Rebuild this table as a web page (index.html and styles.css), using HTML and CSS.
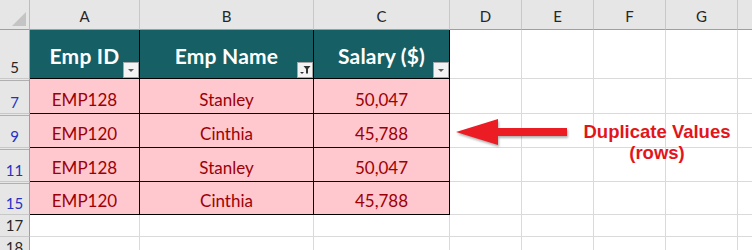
FILE: index.html
```html
<!DOCTYPE html>
<html>
<head>
<meta charset="utf-8">
<link rel="stylesheet" href="styles.css">
</head>
<body>
<div class="stage">
  <div class="sheet">
    <!-- column header row -->
    <div class="corner"><svg class="corner-tri" width="14" height="14" viewBox="0 0 14 14"><path d="M14 0 V14 H0 Z" fill="#c4c4c4"/></svg></div>
    <div class="colhdr">A</div>
    <div class="colhdr">B</div>
    <div class="colhdr">C</div>
    <div class="colhdr">D</div>
    <div class="colhdr">E</div>
    <div class="colhdr">F</div>
    <div class="colhdr">G</div>
    <div class="colhdr"></div>

    <!-- row 5 -->
    <div class="rowhdr">5</div>
    <div class="cell th">Emp ID<span class="fbtn"><svg width="14" height="14" viewBox="0 0 14 14"><path d="M4 6 H10 L7 9 Z" fill="#5a5a5a"/></svg></span></div>
    <div class="cell th">Emp Name<span class="fbtn"><svg width="14" height="14" viewBox="0 0 14 14"><path d="M5.5 3 H12.5 L10 6 V10.5 H8 V6 Z" fill="#333"/><path d="M2 9 H6 L4 11 Z" fill="#333"/></svg></span></div>
    <div class="cell th">Salary ($)<span class="fbtn"><svg width="14" height="14" viewBox="0 0 14 14"><path d="M4 6 H10 L7 9 Z" fill="#5a5a5a"/></svg></span></div>
    <div class="cell"></div><div class="cell"></div><div class="cell"></div><div class="cell"></div><div class="cell"></div>

    <!-- row 7 -->
    <div class="rowhdr filt">7</div>
    <div class="cell td">EMP128</div>
    <div class="cell td">Stanley</div>
    <div class="cell td">50,047</div>
    <div class="cell"></div><div class="cell"></div><div class="cell"></div><div class="cell"></div><div class="cell"></div>

    <!-- row 9 -->
    <div class="rowhdr filt">9</div>
    <div class="cell td">EMP120</div>
    <div class="cell td">Cinthia</div>
    <div class="cell td">45,788</div>
    <div class="cell"></div><div class="cell"></div><div class="cell"></div><div class="cell"></div><div class="cell"></div>

    <!-- row 11 -->
    <div class="rowhdr filt">11</div>
    <div class="cell td">EMP128</div>
    <div class="cell td">Stanley</div>
    <div class="cell td">50,047</div>
    <div class="cell"></div><div class="cell"></div><div class="cell"></div><div class="cell"></div><div class="cell"></div>

    <!-- row 15 -->
    <div class="rowhdr filt">15</div>
    <div class="cell td">EMP120</div>
    <div class="cell td">Cinthia</div>
    <div class="cell td">45,788</div>
    <div class="cell"></div><div class="cell"></div><div class="cell"></div><div class="cell"></div><div class="cell"></div>

    <!-- row 17 -->
    <div class="rowhdr">17</div>
    <div class="cell"></div><div class="cell"></div><div class="cell"></div><div class="cell"></div><div class="cell"></div><div class="cell"></div><div class="cell"></div><div class="cell"></div>

    <!-- row 18 -->
    <div class="rowhdr">18</div>
    <div class="cell"></div><div class="cell"></div><div class="cell"></div><div class="cell"></div><div class="cell"></div><div class="cell"></div><div class="cell"></div><div class="cell"></div>
  </div>

  <svg class="arrow" width="130" height="40" viewBox="0 0 130 40">
    <path d="M3 15 L45 2 L45 11 L114 11 L114 19 L45 19 L45 28 Z" fill="#ec1c24"/>
  </svg>
  <div class="note">Duplicate Values<br>(rows)</div>
</div>
</body>
</html>
```

FILE: styles.css
```css
* { box-sizing: border-box; }
html, body { margin: 0; padding: 0; background: #ffffff; overflow: hidden; }
.stage { position: relative; width: 752px; height: 250px; overflow: hidden; }

.sheet {
  display: grid;
  grid-template-columns: 30px 110px 174px 136px 72px 72px 72px 72px 72px;
  grid-template-rows: 30px 49px 35px 34px 34px 33px 22px 22px;
  font-family: Lato, "Open Sans", sans-serif;
}

.corner {
  background: #e6e6e6;
  border-right: 1px solid #bdbdbd;
  border-bottom: 1px solid #9f9f9f;
  display: flex;
  align-items: flex-end;
  justify-content: flex-end;
  padding: 0 3px 3px 0;
}
.corner-tri { display: block; }

.colhdr {
  background: #e6e6e6;
  border-right: 1px solid #c8c8c8;
  border-bottom: 1px solid #9f9f9f;
  display: flex;
  align-items: flex-end;
  justify-content: center;
  padding-bottom: 3px;
  font-size: 15px;
  color: #262626;
  line-height: 20px;
}

.rowhdr {
  background: #e6e6e6;
  border-right: 1px solid #9f9f9f;
  border-bottom: 1px solid #c8c8c8;
  display: flex;
  align-items: flex-end;
  justify-content: center;
  padding-bottom: 1px;
  font-size: 15px;
  line-height: 20px;
  color: #262626;
}
.rowhdr.filt {
  color: #2431c4;
  box-shadow: inset 0 1px 0 #e6e6e6, inset 0 2px 0 #b0b0b0;
}

.cell {
  border-right: 1px solid #dadada;
  border-bottom: 1px solid #dadada;
}

.th {
  position: relative;
  background: #165f64;
  color: #ffffff;
  font-weight: 700;
  font-size: 21px;
  letter-spacing: 0.2px;
  display: flex;
  align-items: center;
  justify-content: center;
  padding-top: 2px;
  border-right: 1px solid #000;
  border-bottom: 1px solid #000;
}

.fbtn {
  position: absolute;
  right: 0;
  bottom: 0;
  width: 16px;
  height: 16px;
  background: #f3f3f3;
  border: 1px solid #a6a6a6;
  display: flex;
  align-items: center;
  justify-content: center;
}
.fbtn svg { display: block; }

.td {
  background: #ffc7ce;
  color: #9c0006;
  font-size: 17px;
  line-height: 20px;
  display: flex;
  align-items: flex-end;
  justify-content: center;
  padding-bottom: 3px;
  border-right: 1px solid #000;
  border-bottom: 1px solid #000;
}

.arrow {
  position: absolute;
  left: 453px;
  top: 117px;
  filter: drop-shadow(1px 2px 1px rgba(0,0,0,0.3));
}

.note {
  position: absolute;
  left: 567px;
  top: 121px;
  width: 180px;
  text-align: center;
  font-family: "Liberation Sans", Arial, sans-serif;
  font-weight: 700;
  font-size: 18.5px;
  line-height: 21px;
  color: #e3151c;
}
```
